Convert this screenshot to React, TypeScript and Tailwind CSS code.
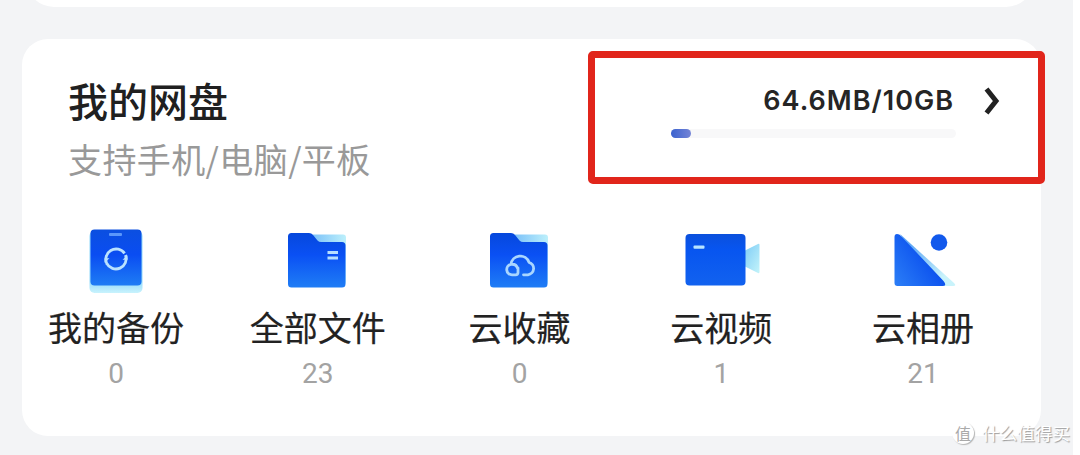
import type { ReactNode } from 'react';

const BackupIcon = () => (
  <svg className="ml-2 h-[90px] w-[100px]" viewBox="0 0 100 90" fill="none">
    <defs>
      <linearGradient id="backup" x1="0" y1="0" x2="0" y2="1">
        <stop offset="0" stopColor="#0b4fe0" />
        <stop offset="0.45" stopColor="#0a4df2" />
        <stop offset="1" stopColor="#1e7cf4" />
      </linearGradient>
      <linearGradient id="backupBase" x1="0" y1="0" x2="0" y2="1">
        <stop offset="0.8" stopColor="#8fd8fa" />
        <stop offset="1" stopColor="#c9f3fd" />
      </linearGradient>
    </defs>
    <rect x="19.5" y="16" width="53" height="62" rx="5" fill="url(#backupBase)" />
    <rect x="20.5" y="14.5" width="51" height="56" rx="4" fill="url(#backup)" />
    <rect x="39" y="18" width="13" height="3" rx="1" fill="#5b97fb" />
    <g stroke="#b9e2ff" strokeWidth="2.8">
      <path d="M37.1 49.2a10.3 10.3 0 0 1 17.5-10.800" />
      <path d="M54.9 38.800a10.3 10.3 0 0 1-17.500 10.800" transform="rotate(8 46 44)" />
    </g>
    <path d="M57.500 44.800h-5l5-4.500zM34.500 43.200h5l-5 4.500z" fill="#b9e2ff" />
  </svg>
);

const FolderIcon = ({ children }: { children: ReactNode }) => (
  <svg className="ml-1 h-[90px] w-[100px]" viewBox="0 0 100 90" fill="none">
    <defs>
      <linearGradient id="folder" x1="0" y1="0" x2="0" y2="1">
        <stop offset="0" stopColor="#0648dc" />
        <stop offset="0.4" stopColor="#0a50f4" />
        <stop offset="1" stopColor="#1f7df5" />
      </linearGradient>
      <linearGradient id="folderBack" x1="0" y1="0" x2="1" y2="0">
        <stop offset="0" stopColor="#6cb6f8" />
        <stop offset="1" stopColor="#bdf0fb" />
      </linearGradient>
    </defs>
    <rect x="34" y="19.5" width="42" height="50" rx="3" fill="url(#folderBack)" />
    <path
      d="M21.5 18H39q2.5 0 4 2l4.5 5.5q1.5 1.5 3.5 1.5H72q3.5 0 3.5 3.5V69q0 3.5-3.5 3.5H21.5q-3.5 0-3.5-3.5V21.5q0-3.5 3.5-3.5z"
      fill="url(#folder)"
    />
    {children}
  </svg>
);

const VideoIcon = () => (
  <svg className="-ml-[2px] h-[90px] w-[100px]" viewBox="0 0 100 90" fill="none">
    <defs>
      <linearGradient id="video" x1="0" y1="0" x2="0" y2="1">
        <stop offset="0" stopColor="#0b50dc" />
        <stop offset="0.3" stopColor="#0755f0" />
        <stop offset="1" stopColor="#1262ef" />
      </linearGradient>
      <linearGradient id="lens" x1="0" y1="0" x2="1" y2="1">
        <stop offset="0" stopColor="#7ccbf6" />
        <stop offset="1" stopColor="#c4f4fa" />
      </linearGradient>
    </defs>
    <path d="M74 36l14-7q1.5-.6 1.5 1v27q0 1.6-1.5 1L74 51z" fill="url(#lens)" />
    <rect x="15.5" y="19" width="60" height="51.5" rx="4" fill="url(#video)" />
    <rect x="23.5" y="30.5" width="11" height="3.2" rx="1" fill="#b8e4ff" />
  </svg>
);

const AlbumIcon = () => (
  <svg className="ml-1 h-[90px] w-[100px]" viewBox="0 0 100 90" fill="none">
    <defs>
      <linearGradient id="album" x1="1" y1="0.2" x2="0" y2="0.9">
        <stop offset="0.3" stopColor="#0a4fee" />
        <stop offset="1" stopColor="#2a7cf6" />
      </linearGradient>
      <linearGradient id="albumBack" x1="0" y1="0" x2="1" y2="1">
        <stop offset="0.2" stopColor="#5ea8f5" />
        <stop offset="0.8" stopColor="#c9f3fb" />
      </linearGradient>
    </defs>
    <path d="M25 19l54 49q3 3-1 3H55z" fill="url(#albumBack)" />
    <path d="M19.5 22q0-3 2.5-3t4 2L68.500 66q4 5-1 5h-45q-3 0-3-3z" fill="url(#album)" />
    <circle cx="64" cy="27.5" r="8.3" fill="#1259ec" />
  </svg>
);

const items = [
  {
    label: '我的备份',
    count: 0,
    icon: <BackupIcon />,
  },
  {
    label: '全部文件',
    count: 23,
    icon: (
      <FolderIcon>
        <rect x="57.5" y="36" width="10.5" height="3" fill="#b5ddff" />
        <rect x="57.5" y="41.5" width="10.5" height="3" fill="#b5ddff" />
      </FolderIcon>
    ),
  },
  {
    label: '云收藏',
    count: 0,
    icon: (
      <FolderIcon>
        <path
          d="M46 53v4.500q0 2.300-2.500 2.300H40a5.300 5.300 0 0 1-1-10.500a9.300 9.300 0 0 1 18-2a6.400 6.400 0 0 1-1 12.500h-4.500M39 49.300q5.500-.5 6.500 4"
          stroke="#a9d6ff"
          strokeWidth="2.8"
          strokeLinecap="round"
          strokeLinejoin="round"
        />
      </FolderIcon>
    ),
  },
  {
    label: '云视频',
    count: 1,
    icon: <VideoIcon />,
  },
  {
    label: '云相册',
    count: 21,
    icon: <AlbumIcon />,
  },
];

export default function App() {
  return (
    <div className="h-[455px] w-[1080px] overflow-hidden bg-white font-['Noto_Sans_CJK_SC',sans-serif]">
      <div className="relative h-full w-[1073px] bg-[#f3f4f6]">
        {/* Bottom edge of the previous card */}
        <div className="ml-[26px] h-[7px] w-[1008px] overflow-hidden">
          <div className="-mt-[53px] h-[60px] rounded-[28px] bg-white"></div>
        </div>

        <section className="mt-8 ml-[22px] h-[397px] w-[1019px] rounded-[26px] bg-white">
          <div className="flex h-[176px] justify-between pl-[46px]">
            <div className="pt-[37px]">
              <h2 className="text-[40px] leading-[48px] font-medium text-[#202020]">我的网盘</h2>
              <p className="mt-[11px] text-[34px] leading-[48px] tracking-[0.4px] whitespace-nowrap text-[#999999]">
                支持手机/电脑/平板
              </p>
            </div>

            {/* Storage quota */}
            <div className="mt-3 -mr-[4px] h-[133px] w-[457px] shrink-0 rounded-[5px] border-[7px] border-[#e1251b] pt-[26px] pr-[37px]">
              <div className="flex h-8 items-center justify-end">
                <span className="pt-[2px] font-[Inter,sans-serif] text-[27px] leading-8 font-semibold tracking-[1px] whitespace-nowrap text-[#252525]">
                  64.6MB/10GB
                </span>
                <svg className="ml-[29px] h-8 w-[18px]" viewBox="0 0 18 32" fill="none">
                  <path d="M3.5 5l9.5 12L3.5 29" stroke="#222222" strokeWidth="5" />
                </svg>
              </div>
              <div className="mt-[13px] ml-[76px] h-[9px] w-[285px] rounded-full bg-[#f8f8f9]">
                <div className="h-full w-[20px] rounded-full bg-gradient-to-r from-[#3a62cf] to-[#7484d6]"></div>
              </div>
            </div>
          </div>

          <div className="flex justify-between pr-[50px] pl-[26px]">
            {items.map((item) => (
              <div key={item.label} className="flex w-[136px] flex-col items-center">
                {item.icon}
                <span className="-mt-[2px] text-[34px] leading-[48px] whitespace-nowrap text-[#222222] [-webkit-text-stroke:0.2px_#222222]">
                  {item.label}
                </span>
                <span className="mt-[7px] font-[Roboto,sans-serif] text-[28px] leading-[32px] text-[#a3a3a3]">
                  {item.count}
                </span>
              </div>
            ))}
          </div>
        </section>

        {/* Watermark */}
        <div className="absolute right-[3px] bottom-[9px] flex items-center gap-[8px]">
          <span className="flex size-[22px] shrink-0 items-center justify-center rounded-full bg-white text-[16px] leading-none text-[#aaaaaa] shadow-[1px_1px_1px_#b5b5b5]">
            值
          </span>
          <span className="text-[17.6px] leading-[26px] whitespace-nowrap text-white [text-shadow:1px_1px_1px_#9a9a9a]">
            什么值得买
          </span>
        </div>
      </div>
    </div>
  );
}
